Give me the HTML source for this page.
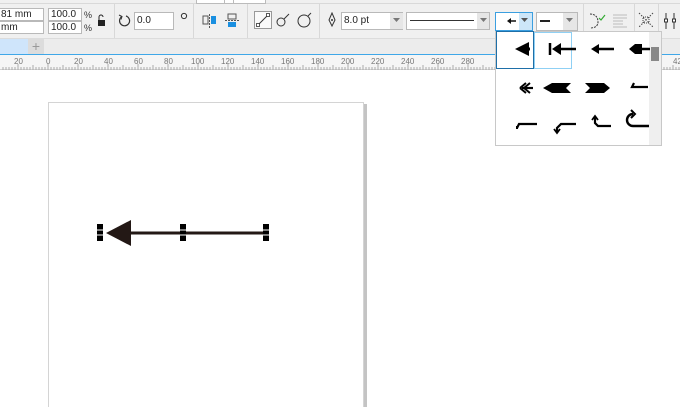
<!DOCTYPE html>
<html><head><style>
html,body{margin:0;width:680px;height:407px;overflow:hidden}
body{background:#fff;font-family:"Liberation Sans",sans-serif;position:relative}
.a{position:absolute}
.inp{position:absolute;background:#fff;border:1px solid #b9b9b9;font-size:10px;line-height:11px;padding-left:2px;box-sizing:border-box;color:#222}
.t{position:absolute;font-size:9px;color:#333}
.sep{position:absolute;top:4px;width:1px;height:34px;background:#d8d8d8}
.rl{position:absolute;top:57px;font-size:8px;color:#777}
</style></head><body>
<div class="a" style="left:0;top:0;width:680px;height:38px;background:#f0f0f0"></div>
<div class="a" style="left:0;top:3px;width:680px;height:1px;background:#d9d9d9"></div>
<div class="a" style="left:196px;top:0;width:68px;height:3px;background:#fff;border:1px solid #bbb;border-top:0"></div>
<div class="a" style="left:224px;top:0;width:8px;height:3px;background:#fff;border:1px solid #bbb;border-top:0"></div>
<div class="inp" style="left:-2px;top:8px;width:46px;height:13px">81 mm</div>
<div class="inp" style="left:-2px;top:21px;width:46px;height:13px">mm</div>
<div class="inp" style="left:48px;top:8px;width:34px;height:13px">100.0</div>
<div class="inp" style="left:48px;top:21px;width:34px;height:13px">100.0</div>
<div class="t" style="left:84px;top:10px">%</div><div class="t" style="left:84px;top:23px">%</div>
<svg class="a" style="left:96px;top:14px" width="12" height="14"><path d="M3 6V3a2 2 0 0 1 4 0" fill="none" stroke="#222"/><rect x="2" y="6" width="7" height="6" fill="#222"/></svg>
<div class="sep" style="left:114px"></div>
<svg class="a" style="left:118px;top:13px" width="16" height="16"><path d="M4 3.5A5 5 0 1 0 8 3" fill="none" stroke="#333" stroke-width="1.2"/><path d="M1 2l3 1.5-1 3" fill="none" stroke="#333"/></svg>
<div class="inp" style="left:134px;top:12px;width:40px;height:18px;line-height:16px">0.0</div>
<svg class="a" style="left:180px;top:12px" width="8" height="8"><circle cx="4" cy="4" r="2.6" fill="none" stroke="#333"/></svg>
<div class="sep" style="left:193px"></div>
<svg class="a" style="left:202px;top:13px" width="16" height="16"><rect x="1" y="3" width="5" height="8" fill="none" stroke="#555"/><rect x="9" y="3" width="5" height="8" fill="#1a8fe0"/><path d="M7.5 1v14" stroke="#555" stroke-dasharray="2 1"/></svg>
<svg class="a" style="left:224px;top:13px" width="16" height="16"><rect x="4" y="1" width="8" height="5" fill="none" stroke="#555"/><rect x="4" y="9" width="8" height="5" fill="#1a8fe0"/><path d="M1 7.5h14" stroke="#555" stroke-dasharray="2 1"/></svg>
<div class="sep" style="left:247px"></div>
<div class="a" style="left:254px;top:11px;width:18px;height:18px;border:1px solid #999;background:#fafafa;box-sizing:border-box"></div>
<svg class="a" style="left:254px;top:11px" width="18" height="18"><path d="M4 14L14 4" stroke="#333"/><rect x="2.5" y="12.5" width="3" height="3" fill="#fff" stroke="#333" stroke-width=".8"/><rect x="12.5" y="2.5" width="3" height="3" fill="#fff" stroke="#333" stroke-width=".8"/></svg>
<svg class="a" style="left:276px;top:12px" width="16" height="16"><circle cx="5" cy="10" r="4" fill="none" stroke="#333"/><path d="M8 7l5-5" stroke="#333"/></svg>
<svg class="a" style="left:296px;top:11px" width="18" height="18"><circle cx="8" cy="10" r="6" fill="none" stroke="#333"/><path d="M12 5l3-3" stroke="#333"/></svg>
<div class="sep" style="left:319px"></div>
<svg class="a" style="left:326px;top:12px" width="12" height="16"><path d="M6 1l3 7-3 6-3-6z" fill="none" stroke="#333"/><circle cx="6" cy="8" r="1" fill="#333"/></svg>
<div class="inp" style="left:341px;top:12px;width:62px;height:18px;line-height:16px">8.0 pt</div>
<div class="a" style="left:390px;top:13px;width:13px;height:16px;background:#e6e6e6"></div>
<svg class="a" style="left:393px;top:18px" width="7" height="5"><path d="M0 0h7L3.5 4z" fill="#777"/></svg>
<div class="a" style="left:406px;top:12px;width:84px;height:18px;background:#fff;border:1px solid #b9b9b9;box-sizing:border-box"></div>
<div class="a" style="left:410px;top:20px;width:64px;height:1px;background:#333"></div>
<div class="a" style="left:477px;top:13px;width:12px;height:16px;background:#e6e6e6"></div>
<svg class="a" style="left:480px;top:18px" width="7" height="5"><path d="M0 0h7L3.5 4z" fill="#777"/></svg>
<div class="a" style="left:495px;top:12px;width:38px;height:19px;background:#fff;border:1px solid #3b9fe0;box-sizing:border-box"></div>
<div class="a" style="left:519px;top:13px;width:13px;height:17px;background:#cde6f8"></div>
<svg class="a" style="left:520px;top:18px" width="9" height="5"><path d="M1 0h7L4.5 4z" fill="#555"/></svg>
<svg class="a" style="left:506px;top:17px" width="14" height="8"><path d="M1 4l4-3v6z" fill="#111"/><path d="M4 4h6" stroke="#111" stroke-width="1.5"/></svg>
<div class="a" style="left:536px;top:12px;width:42px;height:19px;background:#fff;border:1px solid #b9b9b9;box-sizing:border-box"></div>
<div class="a" style="left:540px;top:20px;width:10px;height:1.5px;background:#222"></div>
<div class="a" style="left:563px;top:13px;width:14px;height:17px;background:#e6e6e6"></div>
<svg class="a" style="left:566px;top:18px" width="7" height="5"><path d="M0 0h7L3.5 4z" fill="#777"/></svg>
<div class="sep" style="left:583px"></div>
<svg class="a" style="left:588px;top:12px" width="18" height="18"><path d="M2 2c6 0 8 4 8 8s-3 6-8 6" fill="none" stroke="#333" stroke-dasharray="2 1"/><path d="M11 6l2 2 4-5" fill="none" stroke="#3a3" stroke-width="1.2"/></svg>
<svg class="a" style="left:612px;top:14px" width="18" height="14" opacity=".5"><path d="M1 1h14M1 4h14M1 7h10M1 10h10M1 13h14" stroke="#888"/></svg>
<div class="sep" style="left:634px"></div>
<svg class="a" style="left:638px;top:12px" width="16" height="16"><path d="M1 1l14 14M15 1L1 15" stroke="#444" stroke-dasharray="1.5 1.5"/><rect x="5" y="5" width="6" height="6" fill="none" stroke="#444" stroke-dasharray="1 1"/></svg>
<div class="sep" style="left:658px"></div>
<svg class="a" style="left:662px;top:12px" width="18" height="18"><path d="M4 1v16M12 1v16" stroke="#333"/><rect x="2.5" y="7" width="3" height="3" fill="#fff" stroke="#333"/><rect x="10.5" y="7" width="3" height="3" fill="#fff" stroke="#333"/></svg>
<!-- tab bar -->
<div class="a" style="left:0;top:38px;width:680px;height:16px;background:#ececec;border-top:1px solid #dcdcdc;box-sizing:border-box"></div>
<div class="a" style="left:0;top:39px;width:28px;height:15px;background:#cfe5fb"></div>
<div class="a" style="left:28px;top:39px;width:16px;height:15px;background:#dcdcdc;color:#999;font-size:14px;line-height:14px;text-align:center">+</div>
<div class="a" style="left:0;top:54px;width:680px;height:1px;background:#3fa7e8"></div>
<!-- ruler -->
<div class="a" style="left:0;top:55px;width:680px;height:15px;background:#f5f5f5;border-bottom:1px solid #d0d0d0;box-sizing:border-box"></div>
<svg class="a" style="left:0;top:64px" width="680" height="6">
<g stroke="#aaa" stroke-width="1">
<path d="M3 3v3M6 3v3M9 3v3M12 3v3M15 3v3M18 0v6M21 3v3M24 3v3M27 3v3M30 3v3M33 1v5M36 3v3M39 3v3M42 3v3M45 3v3M48 0v6M51 3v3M54 3v3M57 3v3M60 3v3M63 1v5M66 3v3M69 3v3M72 3v3M75 3v3M78 0v6M81 3v3M84 3v3M87 3v3M90 3v3M93 1v5M96 3v3M99 3v3M102 3v3M105 3v3M108 0v6M111 3v3M114 3v3M117 3v3M120 3v3M123 1v5M126 3v3M129 3v3M132 3v3M135 3v3M138 0v6M141 3v3M144 3v3M147 3v3M150 3v3M153 1v5M156 3v3M159 3v3M162 3v3M165 3v3M168 0v6M171 3v3M174 3v3M177 3v3M180 3v3M183 1v5M186 3v3M189 3v3M192 3v3M195 3v3M198 0v6M201 3v3M204 3v3M207 3v3M210 3v3M213 1v5M216 3v3M219 3v3M222 3v3M225 3v3M228 0v6M231 3v3M234 3v3M237 3v3M240 3v3M243 1v5M246 3v3M249 3v3M252 3v3M255 3v3M258 0v6M261 3v3M264 3v3M267 3v3M270 3v3M273 1v5M276 3v3M279 3v3M282 3v3M285 3v3M288 0v6M291 3v3M294 3v3M297 3v3M300 3v3M303 1v5M306 3v3M309 3v3M312 3v3M315 3v3M318 0v6M321 3v3M324 3v3M327 3v3M330 3v3M333 1v5M336 3v3M339 3v3M342 3v3M345 3v3M348 0v6M351 3v3M354 3v3M357 3v3M360 3v3M363 1v5M366 3v3M369 3v3M372 3v3M375 3v3M378 0v6M381 3v3M384 3v3M387 3v3M390 3v3M393 1v5M396 3v3M399 3v3M402 3v3M405 3v3M408 0v6M411 3v3M414 3v3M417 3v3M420 3v3M423 1v5M426 3v3M429 3v3M432 3v3M435 3v3M438 0v6M441 3v3M444 3v3M447 3v3M450 3v3M453 1v5M456 3v3M459 3v3M462 3v3M465 3v3M468 0v6M471 3v3M474 3v3M477 3v3M480 3v3M483 1v5M486 3v3M489 3v3M492 3v3M495 3v3M664 3v3M667 3v3M670 3v3M673 1v5M676 3v3M679 3v3"/></g></svg>
<div class="rl" style="left:14px">20</div><div class="rl" style="left:46px">0</div>
<div class="rl" style="left:74px">20</div><div class="rl" style="left:104px">40</div><div class="rl" style="left:134px">60</div><div class="rl" style="left:164px">80</div>
<div class="rl" style="left:191px">100</div><div class="rl" style="left:221px">120</div><div class="rl" style="left:251px">140</div><div class="rl" style="left:281px">160</div><div class="rl" style="left:311px">180</div>
<div class="rl" style="left:341px">200</div><div class="rl" style="left:371px">220</div><div class="rl" style="left:401px">240</div><div class="rl" style="left:431px">260</div><div class="rl" style="left:461px">280</div><div class="rl" style="left:673px">42</div>
<!-- page -->
<div class="a" style="left:48px;top:102px;width:316px;height:305px;background:#fff;border:1px solid #d4d4d4;border-bottom:0;box-sizing:border-box"></div>
<div class="a" style="left:364px;top:104px;width:3px;height:303px;background:#c4c4c4"></div>
<svg class="a" style="left:90px;top:215px" width="190" height="35">
<path d="M16 18L41 5v26z" fill="#231815"/><path d="M38 18H173" stroke="#231815" stroke-width="3"/>
<g fill="#000"><rect x="7" y="9" width="6" height="17"/><rect x="90" y="9" width="6" height="17"/><rect x="173" y="9" width="6" height="17"/></g>
<g stroke="#fff" stroke-width="1"><path d="M7 15h6M7 20h6M90 15h6M90 20h6M173 15h6M173 20h6"/></g>
</svg>
<!-- dropdown -->
<div class="a" style="left:495px;top:31px;width:167px;height:115px;background:#fff;border:1px solid #c8c8c8;box-sizing:border-box"></div>
<div class="a" style="left:649px;top:32px;width:12px;height:113px;background:#efefef"></div>
<div class="a" style="left:651px;top:47px;width:8px;height:14px;background:#888"></div>
<div class="a" style="left:496px;top:31px;width:38px;height:38px;border:1px solid #1e6fa8;box-sizing:border-box"></div>
<div class="a" style="left:534px;top:32px;width:38px;height:37px;border:1px solid #8fd0f4;box-sizing:border-box"></div>
<svg class="a" style="left:495px;top:31px" width="155" height="115" fill="#000" stroke="#000">
<path d="M20 18l14-7v14z" stroke="none"/><path d="M30 18h5" stroke-width="3"/>
<path d="M55 12v12" stroke-width="2.5"/><path d="M57 18l9-6v12z" stroke="none"/><path d="M64 18h17" stroke-width="2.5"/>
<path d="M96 18l8-5v10z" stroke="none"/><path d="M102 18h17" stroke-width="2.5"/>
<path d="M134 18l6-5h7v10h-7z" stroke="none"/><path d="M145 18h12" stroke-width="2.5"/>
<path d="M25 57l6-5M25 57l6 5M29 57l6-5M29 57l6 5" stroke-width="2" fill="none"/><path d="M27 57h11" stroke-width="2.2"/>
<path d="M48 57l9-5h19l-5 5 5 5H57z" stroke="none"/>
<path d="M90 52h19l6 5-6 5H90l5-5z" stroke="none"/>
<path d="M139 52l-2 4h16" stroke-width="2.2" fill="none"/>
<path d="M22 97l2-4h18" stroke-width="2.2" fill="none"/><path d="M22 95v3" stroke-width="2"/>
<path d="M62 101v-4l4-4h15" stroke-width="2.2" fill="none"/><path d="M59 98l3 4 3-4" stroke-width="1.8" fill="none"/>
<path d="M100 86v6l3 3h13" stroke-width="2.2" fill="none"/><path d="M97 89l3-4 3 4" stroke-width="1.8" fill="none"/>
<path d="M138 83a6 6 0 0 0 0 12h16" stroke-width="2.4" fill="none"/><path d="M136 79l4 4-4 4" stroke-width="2" fill="none"/>
</svg>
</body></html>
